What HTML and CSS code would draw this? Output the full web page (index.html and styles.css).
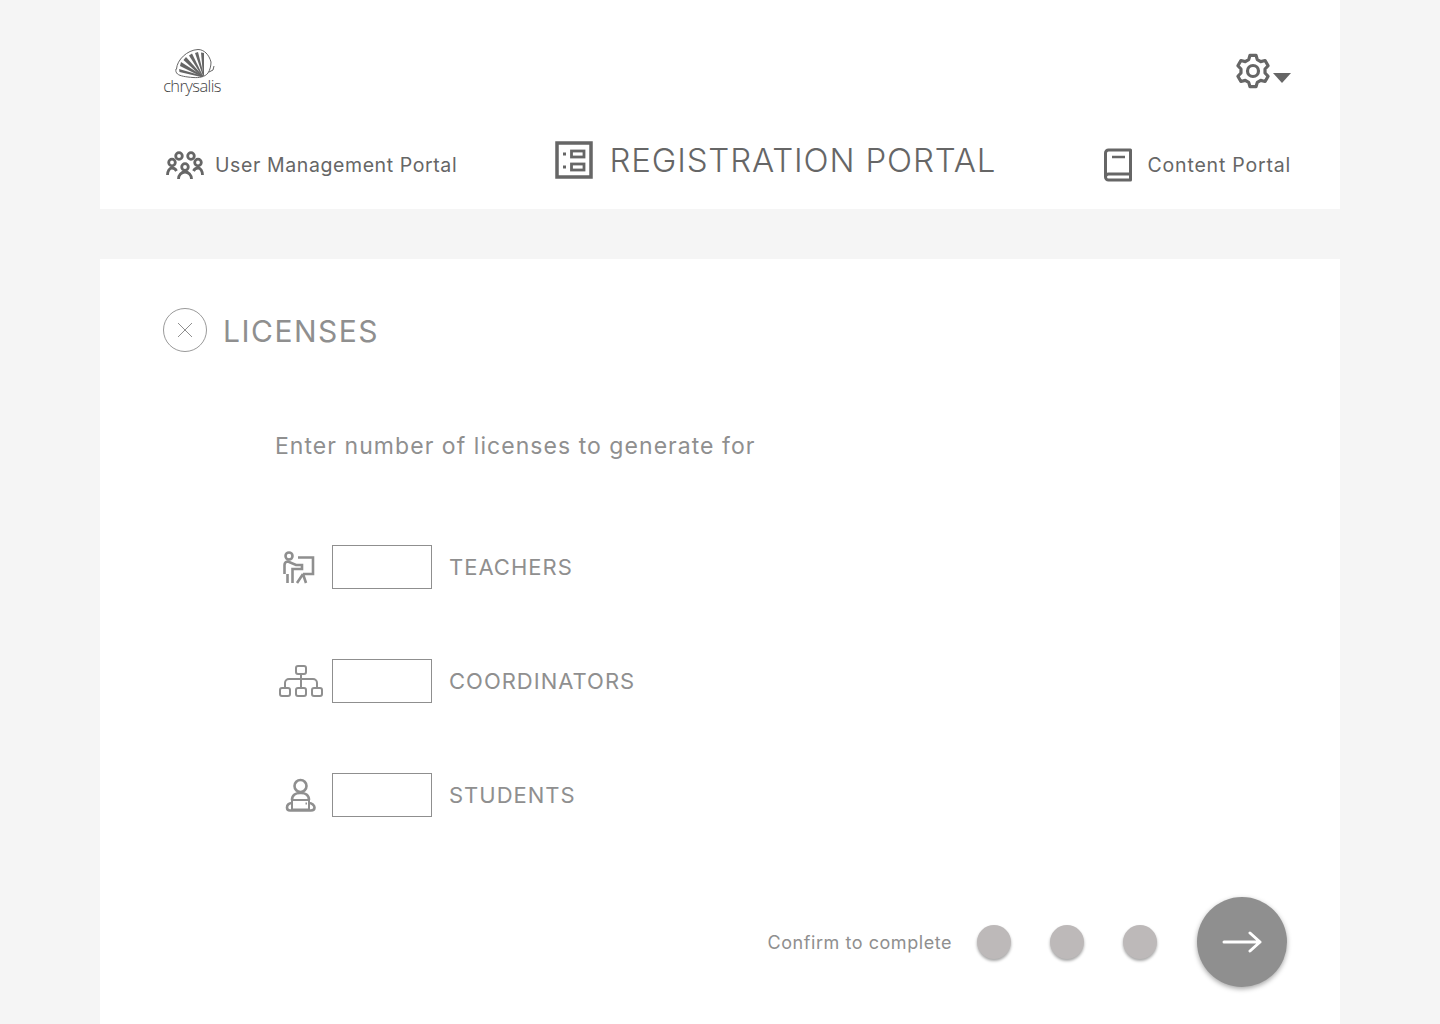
FILE: index.html
```html
<!DOCTYPE html>
<html lang="en">
<head>
    <meta charset="UTF-8">
    <meta name="viewport" content="width=device-width, initial-scale=1.0">
    <title>Registration Portal</title>
    <link rel="stylesheet" href="styles.css">
</head>
<body>
    <div class="page">
        <header class="top-card">
            <div class="top-row">
                <div class="logo">
                    <svg class="logo-mark" width="58" height="33" viewBox="0 0 58 33" fill="none" stroke="#666">
                        <path d="M13.500 21C14 12 24 2 35 1.500c6 0 11 5 13 12.500 0 4-1 8-3 11-3 4-9 5-15 4.500-7-.5-13-1.500-15.500-3.500-1.500-1.500-2-3-1.500-5z" stroke-width="1"/>
                        <polygon points="40,28 16,21 16.500,24 38,29" fill="#666" stroke="none"/>
                        <polygon points="40,28 18,14 17,18 39,29" fill="#666" stroke="none"/>
                        <polygon points="40,28 23,9 20.500,12 39,29" fill="#666" stroke="none"/>
                        <polygon points="40,28 29,5.500 26,7.500 39,28" fill="#666" stroke="none"/>
                        <polygon points="41,28 35,4 32,5 40,28" fill="#666" stroke="none"/>
                        <polygon points="41,27 41,5 38,4.500 40,27" fill="#666" stroke="none"/>
                        <path d="M46 24l4-2 1-4" stroke-width="1"/>
                    </svg>
                    <span class="logo-text">chrysalis</span>
                </div>
                <div class="settings">
                    <svg width="36" height="36" viewBox="0 0 36 36" fill="none" stroke="#666" stroke-width="3.200" stroke-linejoin="round">
                        <polygon points="13.700,6.600 15,2.300 21,2.300 22.300,6.600 25.720,8.580 30.100,7.550 33.100,12.750 30.020,16.020 30.020,19.980 33.100,23.250 30.100,28.450 25.720,27.420 22.300,29.400 21,33.700 15,33.700 13.700,29.400 10.280,27.420 5.900,28.450 2.900,23.250 5.980,19.980 5.980,16.020 2.900,12.750 5.900,7.550 10.280,8.580"/>
                        <circle cx="18" cy="18" r="5.500"/>
                    </svg>
                    <span class="caret"></span>
                </div>
            </div>
            <nav class="portal-nav">
                <a class="portal-link">
                    <svg width="40" height="30" viewBox="0 0 40 30" fill="none" stroke="#666" stroke-width="2.800">
                        <circle cx="14" cy="6" r="3.300"/>
                        <circle cx="26" cy="6" r="3.300"/>
                        <circle cx="7" cy="12.500" r="3.300"/>
                        <circle cx="33" cy="12.500" r="3.300"/>
                        <circle cx="20" cy="17" r="3.300"/>
                        <path d="M2.500 25c0-4 2-7 4.500-7 2 0 3.500 1 4.500 3M37.500 25c0-4-2-7-4.500-7-2 0-3.500 1-4.500 3M13.500 29c0-4 3-7 6.500-7s6.500 3 6.500 7"/>
                    </svg>
                    <span>User Management Portal</span>
                </a>
                <h1 class="portal-title">
                    <svg width="38" height="38" viewBox="0 0 38 38" fill="none" stroke="#666">
                        <rect x="2" y="2" width="34" height="34" stroke-width="3.500"/>
                        <rect x="16.500" y="10" width="12.500" height="6" stroke-width="2.800"/>
                        <rect x="16.500" y="23" width="12.500" height="6" stroke-width="2.800"/>
                        <path d="M8 13h3M8 26h3" stroke-width="3"/>
                    </svg>
                    <span>REGISTRATION PORTAL</span>
                </h1>
                <a class="portal-link content-link">
                    <svg width="30" height="34" viewBox="0 0 30 34" fill="none" stroke="#666" stroke-width="3" stroke-linejoin="round">
                        <path d="M2.500 29V5a3 3 0 0 1 3-3h22v30h-22a3 3 0 0 1-3-3v0a3 3 0 0 1 3-3h22"/>
                        <path d="M9 9h13" stroke-width="2.500"/>
                    </svg>
                    <span>Content Portal</span>
                </a>
            </nav>
        </header>

        <main class="main-card">
            <div class="card-title">
                <span class="close-btn">
                    <svg width="16" height="16" viewBox="0 0 16 16" stroke="#8f8f8f" stroke-width="1">
                        <path d="M1 1l14 14M15 1L1 15"/>
                    </svg>
                </span>
                <h2>LICENSES</h2>
            </div>
            <p class="intro">Enter number of licenses to generate for</p>

            <div class="license-list">
                <div class="license-row">
                    <span class="row-icon">
                        <svg width="36" height="34" viewBox="0 0 36 34" fill="none" stroke="#8f8f8f" stroke-width="2.600">
                            <circle cx="6" cy="6" r="3.500"/>
                            <path d="M1.500 24V15c0-2 1.500-3.500 3.500-3.500L13 15h6v4H9.500v14M4.500 24v9"/>
                            <path d="M15 7.500h15V24H20M20 24l-6 9M20 24l3 9"/>
                        </svg>
                    </span>
                    <input class="license-input" type="text">
                    <label>TEACHERS</label>
                </div>
                <div class="license-row">
                    <span class="row-icon">
                        <svg width="44" height="32" viewBox="0 0 44 32" fill="none" stroke="#8f8f8f" stroke-width="2">
                            <rect x="17" y="1" width="10" height="8" rx="2"/>
                            <rect x="1" y="23" width="10" height="8" rx="2"/>
                            <rect x="17" y="23" width="10" height="8" rx="2"/>
                            <rect x="33" y="23" width="10" height="8" rx="2"/>
                            <path d="M22 9v14M6 23v-5a4 4 0 0 1 4-4h24a4 4 0 0 1 4 4v5"/>
                        </svg>
                    </span>
                    <input class="license-input" type="text">
                    <label>COORDINATORS</label>
                </div>
                <div class="license-row">
                    <span class="row-icon">
                        <svg width="32" height="34" viewBox="0 0 32 34" fill="none" stroke="#8f8f8f" stroke-width="2.600">
                            <circle cx="15.500" cy="8" r="6"/>
                            <path d="M7 22c0-5 4-7 8-7h1c4 0 8 2 8 7"/>
                            <path d="M7 22h17v9.500H7z" stroke-width="2"/>
                            <path d="M7 25c-3 0-5 2-5 4.500S3.500 32.500 5 32.500h21c2 0 3.500-1 3.500-3S27 25 24 25"/>
                            <path d="M20.500 25.500h1.500" stroke-width="2"/>
                        </svg>
                    </span>
                    <input class="license-input" type="text">
                    <label>STUDENTS</label>
                </div>
            </div>

            <div class="confirm-row">
                <span class="confirm-text">Confirm to complete</span>
                <span class="step-dot"></span>
                <span class="step-dot"></span>
                <span class="step-dot"></span>
                <button class="next-btn">
                    <svg width="40" height="24" viewBox="0 0 40 24" fill="none" stroke="#fff" stroke-width="3" stroke-linecap="round" stroke-linejoin="round">
                        <path d="M2 12h36M28 3l10 9-10 9"/>
                    </svg>
                </button>
            </div>
        </main>
    </div>
</body>
</html>
```

FILE: styles.css
```css
body {
    margin: 0;
    background-color: #f5f5f5;
    font-family: Inter, "Open Sans", sans-serif;
    color: #8f8f8f;
}
.page {
    width: 1240px;
    margin: 0 auto;
    height: 1024px;
    overflow: hidden;
}
.top-card {
    background-color: white;
    height: 209px;
    padding: 47px 49px 0 63px;
    box-sizing: border-box;
}
.top-row {
    display: flex;
    justify-content: space-between;
    align-items: flex-start;
    height: 77px;
}
.logo {
    width: 58px;
    display: flex;
    flex-direction: column;
    align-items: center;
    padding-top: 1px;
}
.logo-text {
    font-family: "Open Sans", sans-serif;
    font-weight: 300;
    font-size: 16.500px;
    line-height: 13px;
    letter-spacing: -0.6px;
    color: #444;
    margin-top: -2px;
}
.settings {
    display: flex;
    align-items: flex-end;
    margin-top: 6px;
}
.caret {
    width: 0;
    height: 0;
    border-left: 9px solid transparent;
    border-right: 9px solid transparent;
    border-top: 10px solid #666;
    margin-left: 2px;
    margin-bottom: 6px;
}
.portal-nav {
    display: flex;
    justify-content: space-between;
    align-items: center;
    height: 70px;
}
.portal-link {
    display: flex;
    align-items: center;
    gap: 10px;
    font-size: 19.500px;
    letter-spacing: 0.6px;
    color: #666;
    padding-top: 12px;
}
.portal-link svg {
    margin-left: 2px;
}
.content-link {
    gap: 15px;
    letter-spacing: 0.8px;
}
.portal-title {
    display: flex;
    align-items: center;
    gap: 16px;
    margin: 2px 6px 0 0;
    font-size: 33px;
    font-weight: 300;
    letter-spacing: 0.85px;
    color: #666;
}
.main-card {
    background-color: white;
    margin-top: 50px;
    height: 800px;
    padding: 49px 53px 0 63px;
    box-sizing: border-box;
}
.card-title {
    display: flex;
    align-items: center;
    gap: 16px;
}
.close-btn {
    width: 44px;
    height: 44px;
    border: 1px solid #9a9a9a;
    border-radius: 50%;
    box-sizing: border-box;
    display: flex;
    align-items: center;
    justify-content: center;
}
.card-title h2 {
    margin: 0;
    padding-top: 2px;
    font-size: 30px;
    font-weight: 400;
    letter-spacing: 1.5px;
}
.intro {
    margin: 79px 0 0 112px;
    font-size: 23px;
    line-height: 30px;
    letter-spacing: 1.05px;
}
.license-list {
    display: flex;
    flex-direction: column;
    gap: 70px;
    margin: 84px 0 0 116px;
}
.license-row {
    display: flex;
    align-items: center;
}
.row-icon {
    width: 44px;
    height: 44px;
    display: flex;
    align-items: center;
    justify-content: center;
    margin-right: 9px;
}
.license-input {
    width: 100px;
    height: 44px;
    box-sizing: border-box;
    border: 1px solid #8f8f8f;
    background: white;
    margin-right: 17px;
}
.license-row label {
    font-size: 22px;
    letter-spacing: 1px;
}
.confirm-row {
    display: flex;
    align-items: center;
    justify-content: flex-end;
    margin-top: 80px;
}
.confirm-text {
    font-size: 18px;
    letter-spacing: 0.55px;
    margin-right: 25px;
}
.step-dot {
    width: 34px;
    height: 34px;
    border-radius: 50%;
    background-color: #bdb9b9;
    box-shadow: 0 2px 3px rgba(0,0,0,0.35);
    margin-right: 39px;
}
.step-dot:nth-of-type(4) {
    margin-right: 40px;
}
.next-btn {
    width: 90px;
    height: 90px;
    border: none;
    border-radius: 50%;
    background-color: #8f8f8f;
    box-shadow: 0 2px 5px rgba(0,0,0,0.35);
    display: flex;
    align-items: center;
    justify-content: center;
    padding: 0;
}
```
